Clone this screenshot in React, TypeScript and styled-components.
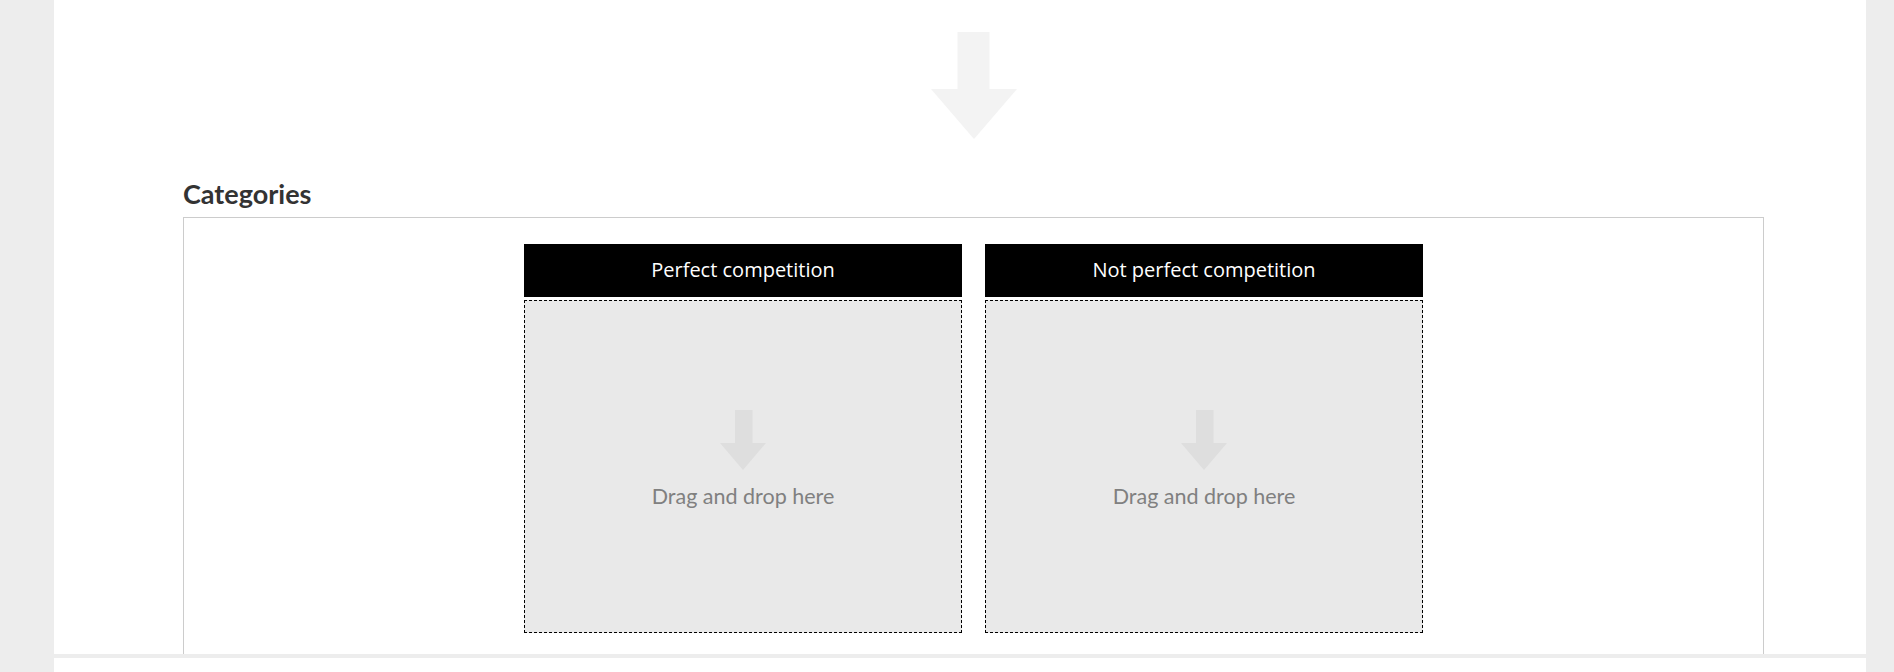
import styled, { createGlobalStyle } from "styled-components";

const GlobalStyle = createGlobalStyle`
  html, body {
    margin: 0;
    padding: 0;
    background: #ededed;
  }
  body {
    font-family: Lato, "Open Sans", sans-serif;
    color: #333;
  }
`;

const Page = styled.div`
  width: 1812px;
  margin: 0 auto 0 54px;
  display: flex;
  flex-direction: column;
  gap: 4px;
`;

const Card = styled.section<{ $height: number }>`
  background: #fff;
  height: ${(props) => props.$height}px;
  overflow: hidden;
  box-sizing: border-box;
`;

const Content = styled.div`
  padding: 32px 102px 0 129px;
  display: flex;
  flex-direction: column;
`;

const BigArrowWrap = styled.div`
  display: flex;
  justify-content: center;
  height: 107px;
  margin-bottom: 39px;
`;

const SectionTitle = styled.h2`
  margin: 0 0 7px;
  font-family: Lato, sans-serif;
  font-weight: 700;
  font-size: 27px;
  line-height: 32px;
  color: #333;
`;

const CategoryBox = styled.div`
  border: 1px solid #ccc;
  padding: 26px 0 40px;
  display: flex;
  justify-content: center;
  gap: 23px;
`;

const Column = styled.div`
  width: 438px;
  display: flex;
  flex-direction: column;
  gap: 3px;
`;

const ColumnHeader = styled.div`
  height: 53px;
  padding-bottom: 3px;
  box-sizing: border-box;
  background: #000;
  color: #fff;
  display: flex;
  align-items: center;
  justify-content: center;
  font-family: "Open Sans", sans-serif;
  font-size: 20px;
`;

const DropZone = styled.div`
  height: 333px;
  box-sizing: border-box;
  border: 1px dashed #000;
  background: #e9e9e9;
  display: flex;
  flex-direction: column;
  align-items: center;
  padding-top: 109px;
  gap: 13px;
`;

const DropHint = styled.span`
  font-family: Lato, sans-serif;
  font-size: 21.5px;
  color: #808080;
`;

const BigArrow = () => (
  <svg width="86" height="107" viewBox="0 0 86 107">
    <polygon
      points="26.5,0 58.5,0 58.5,57 86,57 43,107 0,57 26.5,57"
      fill="#f3f3f3"
    />
  </svg>
);

const SmallArrow = () => (
  <svg width="46" height="60" viewBox="0 0 46 60">
    <polygon points="15,0 32.5,0 32.5,33 46,33 23,60 0,33 15,33" fill="#dedede" />
  </svg>
);

const categories = ["Perfect competition", "Not perfect competition"];

const App = () => {
  return (
    <>
      <GlobalStyle />
      <Page>
        <Card $height={654}>
          <Content>
            <BigArrowWrap>
              <BigArrow />
            </BigArrowWrap>
            <SectionTitle>Categories</SectionTitle>
            <CategoryBox>
              {categories.map((name) => (
                <Column key={name}>
                  <ColumnHeader>{name}</ColumnHeader>
                  <DropZone>
                    <SmallArrow />
                    <DropHint>Drag and drop here</DropHint>
                  </DropZone>
                </Column>
              ))}
            </CategoryBox>
          </Content>
        </Card>
        <Card $height={14} />
      </Page>
    </>
  );
};

export default App;
